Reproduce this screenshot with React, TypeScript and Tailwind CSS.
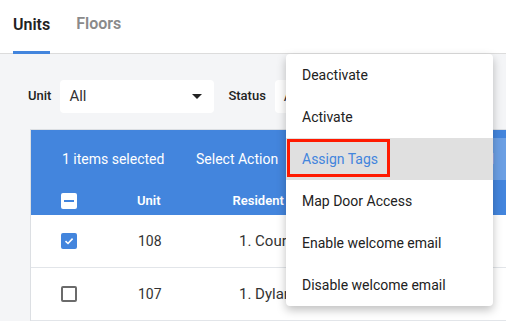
import React from 'react';

const menuItems = [
  'Deactivate',
  'Activate',
  'Assign Tags',
  'Map Door Access',
  'Enable welcome email',
  'Disable welcome email',
];

const rows = [
  { unit: '108', resident: '1. Courtney Adams', checked: true },
  { unit: '107', resident: '1. Dylan Brooks', checked: false },
];

const Caret = () => (
  <svg width="10" height="5" viewBox="0 0 10 5">
    <path d="M0 0 L10 0 L5 5 Z" fill="#222" />
  </svg>
);

const Checkbox = ({ checked }: { checked: boolean }) =>
  checked ? (
    <div className="w-4 h-4 rounded-[2px] bg-[#4385dd] flex items-center justify-center">
      <svg width="12" height="12" viewBox="0 0 12 12">
        <path d="M2.5 6.2 L5 8.5 L9.6 3.6" stroke="white" strokeWidth="1.6" fill="none" />
      </svg>
    </div>
  ) : (
    <div className="w-4 h-4 rounded-[2px] border-2 border-[#6b6b6b] bg-white" />
  );

const App = () => {
  return (
    <div className="relative w-[506px] h-[321px] overflow-hidden bg-[#f4f5f7] font-['Roboto',sans-serif]">
      {/* Tabs */}
      <div className="h-[54px] bg-white border-b border-[#dcdcdc] flex items-end pl-[13px] gap-[26px]">
        <div className="flex flex-col">
          <span className="text-[16px] font-semibold text-[#222] leading-none mb-[18px]">Units</span>
          <div className="h-[3px] bg-[#4385dd] -mb-px" />
        </div>
        <div className="flex flex-col">
          <span className="text-[16px] font-semibold text-[#8a8a8a] leading-none mb-[21px]">Floors</span>
        </div>
      </div>

      {/* Filters */}
      <div className="flex items-center pl-[28px] pt-[25px] h-[75px] pb-[16px]">
        <span className="text-[13px] font-medium text-[#222]">Unit</span>
        <div className="ml-[9px] w-[154px] h-[33px] bg-white rounded-[4px] flex items-center justify-between pl-[9px] pr-[12px]">
          <span className="text-[15px] text-[#333]">All</span>
          <Caret />
        </div>
        <span className="ml-[14px] text-[13px] font-medium text-[#222]">Status</span>
        <div className="ml-[9px] w-[154px] h-[33px] bg-white rounded-[4px] flex items-center pl-[9px]">
          <span className="text-[15px] text-[#333]">All</span>
        </div>
      </div>

      {/* Table card */}
      <div className="ml-[30px] border-t border-l border-[#dcdfe3] bg-white">
        <div className="bg-[#4385dd] text-white">
          <div className="h-[58px] flex items-center pl-[31px] text-[14px]">
            <span className="w-[134px]">1 items selected</span>
            <span className="w-[91px]">Select Action</span>
            <span className="self-start ml-auto mt-[8px] h-[42px] flex items-center pl-[10px] pr-[12px] bg-[#6b9fe4] whitespace-nowrap">
              Select All
            </span>
          </div>
          <div className="h-[27px] pb-[1px] flex items-center pl-[30px] text-[13px] font-semibold">
            <div className="w-4 h-4 rounded-[2px] bg-white flex items-center justify-center">
              <div className="w-[10px] h-[2px] bg-[#4385dd]" />
            </div>
            <span className="ml-[60px]">Unit</span>
            <span className="ml-[72px]">Resident</span>
          </div>
        </div>
        {rows.map((r) => (
          <div key={r.unit} className="h-[53px] flex items-center pl-[30px] border-b border-[#e2e5e9] text-[#333]">
            <Checkbox checked={r.checked} />
            <span className="ml-[61px] w-[101px] text-[14px]">{r.unit}</span>
            <span className="w-[48px] overflow-hidden text-[15px] whitespace-nowrap">{r.resident}</span>
          </div>
        ))}
      </div>

      {/* Dropdown menu */}
      <div className="absolute left-[286px] top-[54px] w-[207px] bg-white rounded-[4px] shadow-[0_4px_10px_rgba(0,0,0,0.25)] overflow-hidden">
        {menuItems.map((item) => {
          const active = item === 'Assign Tags';
          return (
            <div
              key={item}
              className={`relative h-[42px] flex items-center pl-[16px] text-[14px] ${active ? 'bg-[#e0e0e0] text-[#4385dd]' : 'text-[#222]'}`}
            >
              {item}
              {active && (
                <div className="absolute left-[1px] top-[1px] w-[103px] h-[38px] border-[3px] border-[#ff1a00]" />
              )}
            </div>
          );
        })}
      </div>
    </div>
  );
};

export default App;
